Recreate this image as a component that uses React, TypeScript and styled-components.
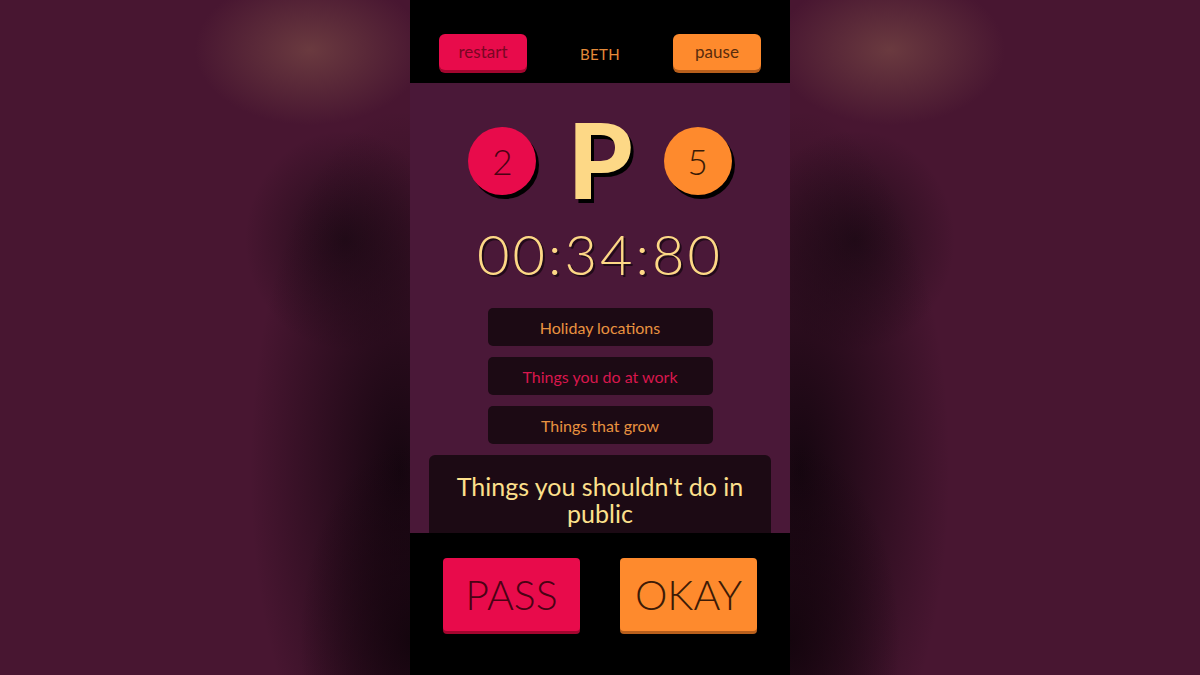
import styled, { createGlobalStyle } from 'styled-components';

const Global = createGlobalStyle`
  html, body { margin: 0; padding: 0; height: 100%; }
  body { font-family: Lato, "Open Sans", sans-serif; }
  #root { height: 100%; }
`;

const Colors = {
  red: '#e80b4b',
  redEdge: '#a3062f',
  orange: '#fe8a2d',
  orangeEdge: '#b85f1c',
  cream: '#fdd886',
  purple: '#4a1838',
  card: '#1c0a14',
};

const categories = [
  { label: 'Holiday locations', tone: 'orange' as const },
  { label: 'Things you do at work', tone: 'red' as const },
  { label: 'Things that grow', tone: 'orange' as const },
];

const Stage = styled.div`
  height: 675px;
  display: flex;
  justify-content: center;
  overflow: hidden;
  background:
    radial-gradient(ellipse 115px 75px at 310px 50px, rgba(108, 60, 64, 0.95), rgba(108, 60, 64, 0) 100%),
    radial-gradient(ellipse 115px 75px at 890px 50px, rgba(108, 60, 64, 0.95), rgba(108, 60, 64, 0) 100%),
    radial-gradient(ellipse 110px 200px at 410px 640px, rgba(18, 4, 12, 0.9), rgba(18, 4, 12, 0) 100%),
    radial-gradient(ellipse 110px 200px at 790px 640px, rgba(18, 4, 12, 0.9), rgba(18, 4, 12, 0) 100%),
    radial-gradient(ellipse 150px 360px at 400px 470px, rgba(22, 6, 16, 1), rgba(22, 6, 16, 0) 100%),
    radial-gradient(ellipse 150px 360px at 800px 470px, rgba(22, 6, 16, 1), rgba(22, 6, 16, 0) 100%),
    radial-gradient(ellipse 100px 110px at 345px 240px, rgba(30, 10, 22, 0.85), rgba(30, 10, 22, 0) 100%),
    radial-gradient(ellipse 100px 110px at 855px 240px, rgba(30, 10, 22, 0.85), rgba(30, 10, 22, 0) 100%),
    #481631;
`;

const Phone = styled.div`
  width: 380px;
  height: 675px;
  display: flex;
  flex-direction: column;
  background: ${Colors.purple};
`;

const TopBar = styled.header`
  height: 83px;
  flex: none;
  background: #000;
  display: grid;
  grid-template-columns: 88px 1fr 88px;
  align-items: start;
  padding: 34px 29px 0;
  box-sizing: border-box;
`;

const SmallButton = styled.button<{ $tone: 'red' | 'orange' }>`
  height: 36px;
  border: none;
  border-radius: 6px;
  padding: 0;
  font-family: Lato, sans-serif;
  font-size: 17px;
  cursor: pointer;
  background: ${(p) => (p.$tone === 'red' ? Colors.red : Colors.orange)};
  color: ${(p) => (p.$tone === 'red' ? '#7a0623' : '#5a2c0c')};
  box-shadow: 0 3px 0 ${(p) => (p.$tone === 'red' ? Colors.redEdge : Colors.orangeEdge)};
  line-height: 34px;
`;

const PlayerName = styled.div`
  text-align: center;
  color: #e48a3a;
  font-size: 15px;
  line-height: 40px;
  letter-spacing: 0.3px;
`;

const Board = styled.main`
  flex: 1;
  overflow: hidden;
  display: flex;
  flex-direction: column;
  align-items: center;
  padding-top: 35px;
  box-sizing: border-box;
`;

const ScoreRow = styled.div`
  height: 86px;
  display: flex;
  align-items: center;
  gap: 31px;
`;

const ScoreBall = styled.div<{ $tone: 'red' | 'orange' }>`
  width: 68px;
  height: 68px;
  border-radius: 50%;
  display: flex;
  align-items: center;
  justify-content: center;
  font-size: 35px;
  font-weight: 300;
  color: ${(p) => (p.$tone === 'red' ? '#4a0214' : '#3a1a06')};
  background: ${(p) => (p.$tone === 'red' ? Colors.red : Colors.orange)};
  box-shadow: 3px 4px 0 #000;
`;

const Letter = styled.div`
  font-size: 104px;
  font-weight: 900;
  line-height: 82px;
  height: 86px;
  color: ${Colors.cream};
  text-shadow: 3px 4px 0 #000;
`;

const Timer = styled.div`
  margin-top: 12px;
  font-size: 56px;
  font-weight: 300;
  line-height: 76px;
  color: ${Colors.cream};
  letter-spacing: 3px;
  text-shadow: 2px 2px 0 rgba(0, 0, 0, 0.55);
`;

const CategoryList = styled.div`
  margin-top: 16px;
  display: flex;
  flex-direction: column;
  gap: 11px;
`;

const Category = styled.div<{ $tone: 'red' | 'orange' }>`
  width: 225px;
  height: 38px;
  border-radius: 5px;
  background: ${Colors.card};
  display: flex;
  align-items: center;
  justify-content: center;
  font-size: 16px;
  color: ${(p) => (p.$tone === 'red' ? '#d8174d' : '#e99240')};
`;

const Prompt = styled.div`
  margin-top: 11px;
  width: 342px;
  flex: none;
  height: 110px;
  border-radius: 6px 6px 0 0;
  background: ${Colors.card};
  box-sizing: border-box;
  padding: 18px 18px 0;
  text-align: center;
  font-size: 25px;
  line-height: 27px;
  color: #fde08c;
`;

const BottomBar = styled.footer`
  height: 142px;
  flex: none;
  background: #000;
  display: flex;
  justify-content: center;
  gap: 40px;
  padding-top: 25px;
  box-sizing: border-box;
`;

const BigButton = styled.button<{ $tone: 'red' | 'orange' }>`
  width: 137px;
  height: 73px;
  border: none;
  border-radius: 4px;
  padding: 0;
  font-family: Lato, sans-serif;
  font-size: 41px;
  font-weight: 300;
  cursor: pointer;
  background: ${(p) => (p.$tone === 'red' ? Colors.red : Colors.orange)};
  color: ${(p) => (p.$tone === 'red' ? '#4a0214' : '#3d1a06')};
  box-shadow: 0 3px 0 ${(p) => (p.$tone === 'red' ? Colors.redEdge : Colors.orangeEdge)};
`;

export default function App() {
  return (
    <>
      <Global />
      <Stage>
        <Phone>
          <TopBar>
            <SmallButton $tone="red">restart</SmallButton>
            <PlayerName>BETH</PlayerName>
            <SmallButton $tone="orange">pause</SmallButton>
          </TopBar>
          <Board>
            <ScoreRow>
              <ScoreBall $tone="red">2</ScoreBall>
              <Letter>P</Letter>
              <ScoreBall $tone="orange">5</ScoreBall>
            </ScoreRow>
            <Timer>00:34:80</Timer>
            <CategoryList>
              {categories.map((c) => (
                <Category key={c.label} $tone={c.tone}>
                  {c.label}
                </Category>
              ))}
            </CategoryList>
            <Prompt>Things you shouldn't do in public</Prompt>
          </Board>
          <BottomBar>
            <BigButton $tone="red">PASS</BigButton>
            <BigButton $tone="orange">OKAY</BigButton>
          </BottomBar>
        </Phone>
      </Stage>
    </>
  );
}
